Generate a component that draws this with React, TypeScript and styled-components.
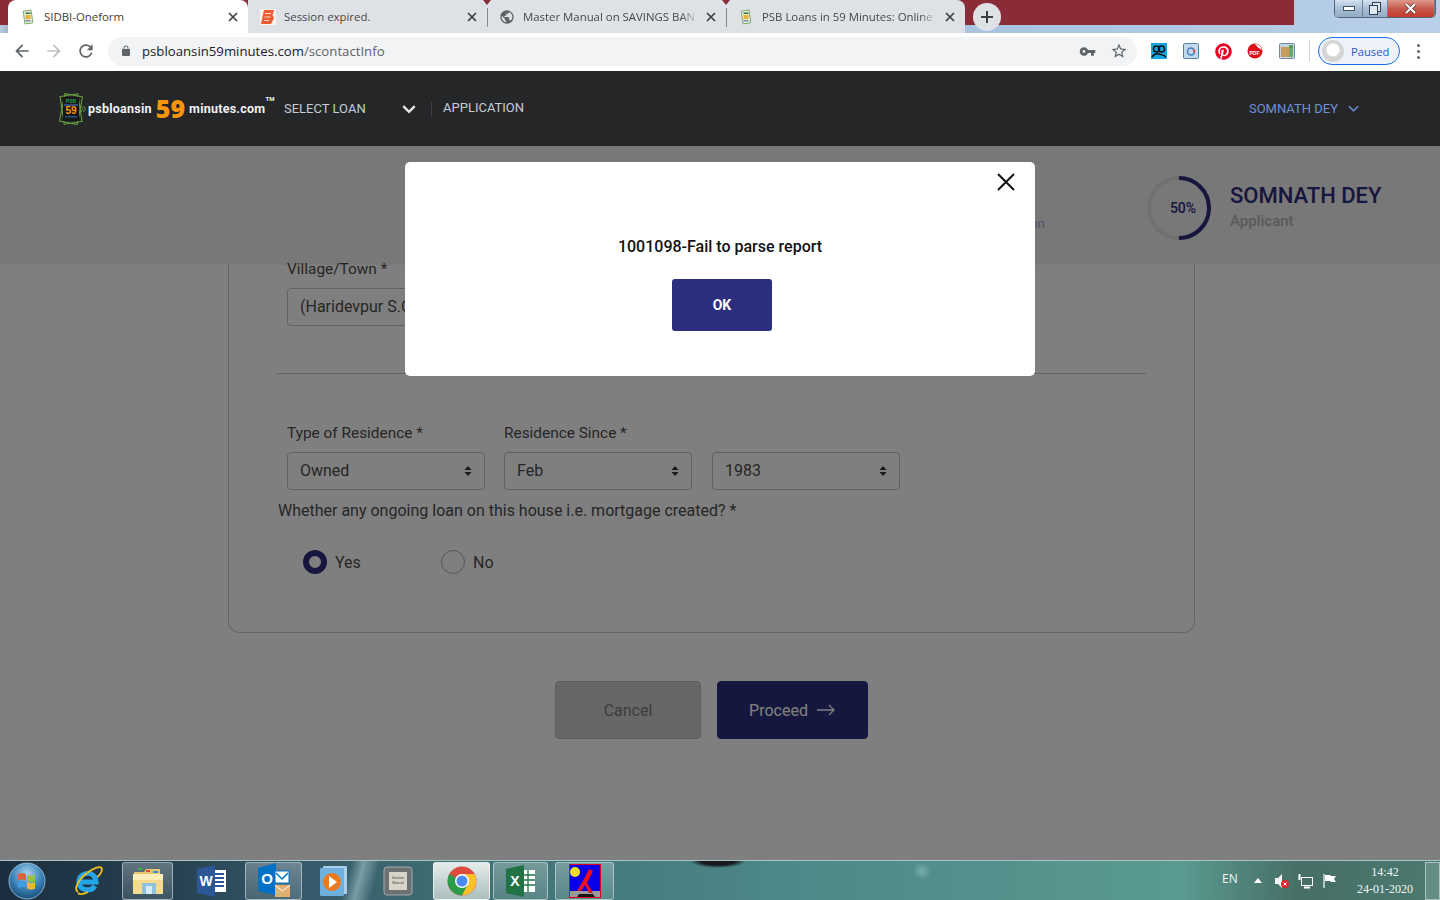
import React from "react";
import styled, { createGlobalStyle } from "styled-components";
import { FaPinterest } from "react-icons/fa";

const GlobalStyle = createGlobalStyle`
  html, body {
    margin: 0;
    padding: 0;
    background: #fff;
  }
  * {
    box-sizing: border-box;
  }
`;

const Screen = styled.div`
  width: 1440px;
  height: 900px;
  display: flex;
  flex-direction: column;
  overflow: hidden;
  font-family: Roboto, "Liberation Sans", sans-serif;
`;

/* ---------- browser chrome ---------- */

const TabStrip = styled.div`
  flex: none;
  height: 33px;
  display: flex;
  padding-left: 8px;
  position: relative;
  background:
    linear-gradient(#8a2c37, #8a2c37) no-repeat 0 0 / 1294px 25px,
    linear-gradient(90deg, #b7cbdf 0, #9db4ca 8px, #a8c4e0 1000px, #b9d0e8 100%);
`;

const Tab = styled.div<{ $active?: boolean; $divider?: boolean }>`
  position: relative;
  width: ${p => (p.$active ? 240 : 239)}px;
  display: flex;
  align-items: center;
  padding: 0 10px 0 12px;
  background: ${p => (p.$active ? "#fff" : "#dee1e6")};
  border-radius: ${p => (p.$active ? "8px 8px 0 0" : "0")};
  color: ${p => (p.$active ? "#3c4043" : "#45484c")};
  font-family: "Open Sans", "Liberation Sans", sans-serif;
  font-size: 11.4px;

  ${p =>
    p.$divider &&
    `
    &::before {
      content: "";
      position: absolute;
      left: 0;
      top: 8px;
      height: 19px;
      width: 1px;
      background: #85888d;
    }
    &::after {
      content: "";
      position: absolute;
      left: -4px;
      top: 0;
      border-left: 4px solid transparent;
      border-right: 4px solid transparent;
      border-top: 5px solid #8a2c37;
    }
  `}
`;

const LastTab = styled(Tab)`
  border-radius: 0 8px 0 0;
`;

const TabIcon = styled.svg`
  flex: none;
  width: 16px;
  height: 16px;
  margin-right: 8px;
`;

const TabTitle = styled.span<{ $fade?: boolean }>`
  flex: 1;
  white-space: nowrap;
  overflow: hidden;
  ${p =>
    p.$fade &&
    `
    -webkit-mask-image: linear-gradient(90deg, #000 90%, transparent 100%);
    mask-image: linear-gradient(90deg, #000 90%, transparent 100%);
  `}
`;

const TabClose = styled.svg`
  flex: none;
  width: 10px;
  height: 10px;
  margin-left: 8px;
`;

const NewTab = styled.div`
  width: 28px;
  height: 28px;
  margin: 3px 0 0 8px;
  border-radius: 50%;
  background: #dee1e6;
  display: flex;
  align-items: center;
  justify-content: center;
`;

const WindowControls = styled.div`
  position: absolute;
  top: 0;
  right: 4px;
  height: 18px;
  width: 102px;
  display: flex;
  border: 1px solid #54677c;
  border-top: none;
  border-radius: 0 0 5px 5px;
  overflow: hidden;
`;

const WindowButton = styled.div<{ $w: number; $close?: boolean }>`
  width: ${p => p.$w}px;
  display: flex;
  align-items: center;
  justify-content: center;
  border-right: 1px solid #6e8196;
  background: ${p =>
    p.$close
      ? "linear-gradient(#e09a8e, #c75a4c 50%, #c23a2c)"
      : "linear-gradient(#d4e2f0, #a9bed4 50%, #93abc4)"};
`;

const Toolbar = styled.div`
  flex: none;
  height: 38px;
  display: flex;
  align-items: center;
  background: #fff;
  padding: 0 12px 2px 6px;
`;

const NavButton = styled.div`
  width: 32px;
  display: flex;
  justify-content: center;
`;

const AddressBar = styled.div`
  width: 1029px;
  height: 29px;
  margin-left: 6px;
  border-radius: 15px;
  background: #f1f3f4;
  display: flex;
  align-items: center;
  padding: 0 2px 0 12px;
`;

const Url = styled.div`
  flex: 1;
  margin-left: 10px;
  font-family: "Open Sans", "Liberation Sans", sans-serif;
  font-size: 13.2px;
  color: #202124;
  span {
    color: #5f6368;
  }
`;

const AddressAction = styled.div`
  width: 32px;
  display: flex;
  justify-content: center;
`;

const Extensions = styled.div`
  display: flex;
  margin-left: 6px;
`;

const Extension = styled.div`
  width: 32px;
  display: flex;
  justify-content: center;
  align-items: center;
`;

const ToolbarSeparator = styled.div`
  width: 1px;
  height: 22px;
  margin: 0 8px 0 6px;
  background: #d4d6d9;
`;

const ProfilePill = styled.div`
  width: 82px;
  height: 28px;
  border: 1px solid #1a73e8;
  border-radius: 14px;
  background: #edf2fb;
  display: flex;
  align-items: center;
  padding-left: 3px;
  font-family: "Open Sans", "Liberation Sans", sans-serif;
  font-size: 11.2px;
  color: #2a56c6;
`;

const Avatar = styled.div`
  width: 22px;
  height: 22px;
  margin-right: 7px;
  border-radius: 50%;
  background: radial-gradient(circle at 50% 45%, #fff 0 6px, #d5d5d5 7px);
`;

const Kebab = styled.div`
  margin-left: 17px;
  display: flex;
  flex-direction: column;
  gap: 3px;
  i {
    width: 3px;
    height: 3px;
    border-radius: 50%;
    background: #5f6368;
  }
`;

/* ---------- site header ---------- */

const Navbar = styled.header`
  flex: none;
  height: 75px;
  background: #252628;
  display: flex;
  align-items: center;
  padding: 0 80px 0 56px;
`;

const Logo = styled.div`
  display: flex;
  align-items: center;
  width: 228px;
`;

const LogoText = styled.div`
  margin-left: 2px;
  display: flex;
  align-items: center;
  font-family: Roboto, sans-serif;
  font-weight: 700;
  font-size: 12.5px;
  letter-spacing: 0.25px;
  color: #f2f2f2;
  white-space: nowrap;
`;

const LogoNumber = styled.span`
  font-family: "Open Sans", sans-serif;
  font-weight: 800;
  font-size: 25px;
  letter-spacing: 0;
  color: #f7950d;
  margin: 0 4px;
  line-height: 1;
`;

const LogoTm = styled.sup`
  font-size: 6px;
  align-self: flex-start;
  margin: 0;
  line-height: 1;
`;

const NavLink = styled.div`
  font-size: 13px;
  color: #c6cdd8;
  white-space: nowrap;
`;

const ApplicationLink = styled(NavLink)`
  margin-top: -2px;
`;

const SelectLoan = styled(NavLink)`
  width: 133px;
  display: flex;
  align-items: center;
  justify-content: space-between;
`;

const NavDivider = styled.div`
  width: 1px;
  height: 14px;
  margin: 0 11px 0 14px;
  background: #3e4043;
`;

const UserMenu = styled.div`
  margin-left: auto;
  display: flex;
  align-items: center;
  gap: 9px;
  font-size: 13px;
  color: #6f8fdc;
`;

/* ---------- page below the dim layer ---------- */

const Content = styled.main`
  flex: 1;
  position: relative;
  overflow: hidden;
  background: #fff;
`;

const SubHeader = styled.div`
  height: 117px;
  display: flex;
  align-items: center;
  background: #f0f0f0;
  box-shadow: 0 1px 2px rgba(0, 0, 0, 0.1);
  position: relative;
  z-index: 1;
`;

const StepLabel = styled.div`
  margin-left: auto;
  padding-top: 38px;
  font-size: 13px;
  color: #a9a9d6;
  white-space: nowrap;
`;

const Progress = styled.div`
  position: relative;
  width: 64px;
  height: 64px;
  margin: 7px 19px 0 102px;
  padding-left: 8px;
  display: flex;
  align-items: center;
  justify-content: center;
  font-size: 14px;
  font-weight: 500;
  color: #2c2c7c;
  svg {
    position: absolute;
    inset: 0;
  }
`;

const Applicant = styled.div`
  width: 210px;
  padding-top: 3px;
`;

const ApplicantName = styled.div`
  font-size: 22px;
  font-weight: 500;
  line-height: 30px;
  color: #2c2c7c;
  white-space: nowrap;
`;

const ApplicantRole = styled.div`
  font-size: 15px;
  font-weight: 500;
  line-height: 20px;
  color: #b3b3b8;
`;

/* the card starts under the sub header, its top edge is never seen */
const Card = styled.section`
  width: 967px;
  height: 370px;
  margin-left: 228px;
  padding: 0 48px;
  border: 1px solid #c9c9c9;
  border-top: none;
  border-radius: 0 0 12px 12px;
  color: #4c4c4c;
`;

const Field = styled.div<{ $w?: number }>`
  width: ${p => p.$w ?? 198}px;
`;

const FieldLabel = styled.div`
  font-size: 15.4px;
  line-height: 18px;
  white-space: nowrap;
  margin-bottom: 10px;
  min-height: 18px;
`;

const TextBox = styled.div`
  height: 38px;
  border: 1px solid #c4c4c4;
  border-radius: 4px;
  display: flex;
  align-items: center;
  padding: 0 12px 2px;
  font-size: 16px;
  white-space: nowrap;
  overflow: hidden;
`;

const SelectBox = styled(TextBox)`
  justify-content: space-between;
  svg {
    flex: none;
    margin-top: 2px;
  }
`;

const VillageRow = styled.div`
  display: flow-root;
`;

const VillageField = styled(Field)`
  margin: -3px 0 0 10px;
`;

const Rule = styled.hr`
  margin: 47px 0 50px;
  border: none;
  border-top: 1px solid #c9c9c9;
`;

const ResidenceRow = styled.div`
  display: flex;
  padding-left: 10px;
  gap: 19px;
`;

const SinceFields = styled.div`
  display: flex;
  gap: 20px;
`;

const Question = styled.div`
  margin-top: 11px;
  padding-left: 1px;
  font-size: 16px;
  line-height: 20px;
  white-space: nowrap;
`;

const RadioRow = styled.div`
  display: flex;
  margin: 29px 0 0 26px;
`;

const RadioOption = styled.label`
  width: 138px;
  display: flex;
  align-items: center;
  gap: 8px;
  font-size: 16px;
`;

const RadioMark = styled.span<{ $checked?: boolean }>`
  width: 24px;
  height: 24px;
  border-radius: 50%;
  border: ${p => (p.$checked ? "6px solid #2c2c7c" : "1px solid #aaa")};
  background: #fff;
`;

const Actions = styled.div`
  width: 967px;
  margin: 48px 0 0 228px;
  display: flex;
  justify-content: center;
  gap: 16px;
`;

const ActionButton = styled.button<{ $primary?: boolean }>`
  width: ${p => (p.$primary ? 151 : 146)}px;
  height: 58px;
  border-radius: 4px;
  border: 1px solid ${p => (p.$primary ? "#2c2c7c" : "#bdbdbd")};
  background: ${p => (p.$primary ? "#2c2f7c" : "#cfcfcf")};
  color: ${p => (p.$primary ? "#fff" : "#7a7a7a")};
  font-family: inherit;
  font-size: 16px;
  display: flex;
  align-items: center;
  justify-content: center;
  gap: 8px;
`;

/* ---------- dialog ---------- */

const Overlay = styled.div`
  position: absolute;
  inset: 0;
  z-index: 5;
  background: rgba(0, 0, 0, 0.5);
`;

const Modal = styled.div`
  position: relative;
  width: 630px;
  height: 214px;
  margin: 16px auto 0;
  padding-top: 75px;
  background: #fff;
  border-radius: 5px;
  display: flex;
  flex-direction: column;
  align-items: center;
`;

const ModalClose = styled.svg`
  position: absolute;
  top: 11px;
  right: 20px;
`;

const ModalMessage = styled.div`
  font-size: 16px;
  font-weight: 500;
  line-height: 20px;
  color: #111;
`;

const ModalButton = styled.button`
  width: 100px;
  height: 52px;
  margin: 22px 0 0 4px;
  border: none;
  border-radius: 3px;
  background: #2c2f7f;
  color: #fff;
  font-family: inherit;
  font-size: 14px;
  font-weight: 700;
`;

/* ---------- windows taskbar ---------- */

const Taskbar = styled.footer`
  flex: none;
  height: 40px;
  display: flex;
  align-items: center;
  border-top: 1px solid #a9c4c4;
  background:
    radial-gradient(ellipse 28px 7px at 718px 0, #17191d 60%, transparent 100%),
    radial-gradient(circle 9px at 922px 10px, rgba(160, 205, 200, 0.5), transparent),
    linear-gradient(105deg, transparent 340px, rgba(185, 215, 220, 0.5) 352px, transparent 368px),
    linear-gradient(90deg, #1b2d40 0, #26414f 170px, #36596a 300px, #3f7173 480px, #4d8687 760px, #5a9a90 1180px, #466e66 1300px, #4b7a70 100%);
`;

const TaskSlot = styled.div<{ $w: number; $state?: "open" | "focus" }>`
  flex: none;
  width: ${p => p.$w}px;
  height: 38px;
  display: flex;
  align-items: center;
  justify-content: center;
  border-radius: 3px;
  ${p =>
    p.$state === "open" &&
    `
    border: 1px solid rgba(220, 235, 240, 0.55);
    background: linear-gradient(rgba(255,255,255,0.28), rgba(255,255,255,0.12));
  `}
  ${p =>
    p.$state === "focus" &&
    `
    border: 1px solid rgba(240, 245, 245, 0.8);
    background: linear-gradient(#e4eceb, #a9bfbe);
  `}
`;

const TaskEdge = styled.div<{ $w: number }>`
  flex: none;
  width: ${p => p.$w}px;
  height: 38px;
`;

const Tray = styled.div`
  margin-left: auto;
  height: 38px;
  display: flex;
  align-items: center;
  color: #f2f6f5;
  font-family: "Open Sans", "Liberation Sans", sans-serif;
  font-size: 12px;
`;

const TrayLang = styled.div`
  width: 22px;
  margin: -4px 2px 0 0;
`;

const TrayIcon = styled.div`
  width: 24px;
  display: flex;
  justify-content: center;
`;

const Clock = styled.div`
  width: 76px;
  margin-left: 5px;
  text-align: center;
  line-height: 17px;
  font-family: "Liberation Serif", serif;
  font-size: 12px;
`;

const ShowDesktop = styled.div`
  width: 15px;
  height: 38px;
  margin-left: 2px;
  border: 1px solid rgba(220, 235, 235, 0.6);
  background: rgba(255, 255, 255, 0.15);
`;

const Glyph: React.FC<{ d: string; size?: number; color?: string }> = ({ d, size = 20, color = "#5f6368" }) => (
  <svg width={size} height={size} viewBox="0 0 24 24" fill={color}>
    <path d={d} />
  </svg>
);

const BACK = "M20 11H7.83l5.59-5.59L12 4l-8 8 8 8 1.41-1.41L7.83 13H20v-2z";
const FORWARD = "M12 4l-1.41 1.41L16.17 11H4v2h12.17l-5.58 5.59L12 20l8-8z";
const RELOAD =
  "M17.65 6.35C16.2 4.9 14.21 4 12 4c-4.42 0-7.99 3.58-7.99 8s3.57 8 7.99 8c3.73 0 6.84-2.55 7.73-6h-2.08c-.82 2.33-3.04 4-5.65 4-3.31 0-6-2.69-6-6s2.69-6 6-6c1.66 0 3.14.69 4.22 1.78L13 11h7V4l-2.35 2.35z";
const LOCK =
  "M18 8h-1V6c0-2.76-2.24-5-5-5S7 3.24 7 6v2H6c-1.1 0-2 .9-2 2v10c0 1.1.9 2 2 2h12c1.1 0 2-.9 2-2V10c0-1.1-.9-2-2-2zM9 6c0-1.66 1.34-3 3-3s3 1.34 3 3v2H9V6z";
const KEY =
  "M12.65 10C11.83 7.67 9.61 6 7 6c-3.31 0-6 2.69-6 6s2.69 6 6 6c2.61 0 4.83-1.67 5.65-4H17v4h4v-4h2v-4H12.65zM7 14c-1.1 0-2-.9-2-2s.9-2 2-2 2 .9 2 2-.9 2-2 2z";
const STAR =
  "M22 9.24l-7.19-.62L12 2 9.19 8.63 2 9.24l5.46 4.73L5.82 21 12 17.27 18.18 21l-1.63-7.03L22 9.24zM12 15.4l-3.76 2.27 1-4.28-3.32-2.88 4.38-.38L12 6.1l1.71 4.04 4.38.38-3.32 2.88 1 4.28L12 15.4z";
const GLOBE =
  "M12 2C6.48 2 2 6.48 2 12s4.48 10 10 10 10-4.48 10-10S17.52 2 12 2zm-1 17.93c-3.95-.49-7-3.85-7-7.93 0-.62.08-1.21.21-1.79L9 15v1c0 1.1.9 2 2 2v1.93zm6.9-2.54c-.26-.81-1-1.39-1.9-1.39h-1v-3c0-.55-.45-1-1-1H8v-2h2c.55 0 1-.45 1-1V7h2c1.1 0 2-.9 2-2v-.41c2.93 1.19 5 4.06 5 7.41 0 2.08-.8 3.97-2.1 5.39z";

const CloseX: React.FC = () => (
  <TabClose viewBox="0 0 10 10">
    <path d="M1 1l8 8M9 1l-8 8" stroke="#3c4043" strokeWidth="1.7" />
  </TabClose>
);

const PsbFavicon: React.FC = () => (
  <TabIcon viewBox="0 0 16 16">
    <rect x="4" y="1.5" width="8" height="13" rx="1" fill="#e8ecd8" stroke="#7fae6a" strokeWidth="1" transform="rotate(-8 8 8)" />
    <rect x="5.5" y="6" width="5" height="4" fill="#e8b23a" />
    <rect x="5.5" y="3.5" width="5" height="1.5" fill="#3c6e45" />
    <rect x="5.5" y="11" width="5" height="1.5" fill="#7b8cb8" />
  </TabIcon>
);

const BankFavicon: React.FC = () => (
  <TabIcon viewBox="0 0 16 16">
    <rect width="16" height="16" fill="#fdf1ec" />
    <path d="M1 15L4 1h10l-1.500 5 1.500 3-3 6z" fill="#ee5b2f" />
    <path d="M5 4.500h6M4.500 8h6M4 11.500h5" stroke="#ffd9cc" strokeWidth="1.200" />
  </TabIcon>
);

const SmallChevron: React.FC<{ color: string; size?: number; w?: number }> = ({ color, size = 14, w = 2 }) => (
  <svg width={size} height={size} viewBox="0 0 14 14" fill="none">
    <path d="M2 4.5L7 9.5L12 4.5" stroke={color} strokeWidth={w} />
  </svg>
);

const UpDown: React.FC = () => (
  <svg width="8" height="12" viewBox="0 0 8 12" fill="#333">
    <path d="M4 1L7.6 5H.4zM4 11L.4 7h7.2z" />
  </svg>
);

const LogoMark: React.FC = () => (
  <svg width="30" height="32" viewBox="0 0 30 32" fill="none">
    <rect x="6" y="2" width="18" height="28" stroke="#6aa53e" strokeWidth="1" transform="rotate(-9 15 16)" />
    <rect x="6" y="2" width="18" height="28" stroke="#6aa53e" strokeWidth="1" transform="rotate(11 15 16)" />
    <rect x="7" y="4" width="16" height="24" fill="#17191b" />
    <text x="15" y="10" textAnchor="middle" fontSize="5" fontWeight="700" fill="#1ea34a" fontFamily="Liberation Sans">PSB</text>
    <rect x="8" y="11" width="14" height="2" fill="#2f4f7f" />
    <text x="15" y="21" textAnchor="middle" fontSize="10" fontWeight="700" fill="#f7950d" fontFamily="Liberation Sans">59</text>
    <rect x="9" y="23" width="12" height="1.500" fill="#2f4f7f" />
    <path d="M25 13l2 3-2 3M27.500 13l2 3-2 3" stroke="#6aa53e" strokeWidth="0.800" />
  </svg>
);

const OrbIcon: React.FC = () => (
  <svg width="38" height="38" viewBox="0 0 38 38">
    <defs>
      <radialGradient id="orb" cx="50%" cy="30%" r="75%">
        <stop offset="0" stopColor="#a8d4ee" />
        <stop offset="0.55" stopColor="#3b82b8" />
        <stop offset="1" stopColor="#14466e" />
      </radialGradient>
    </defs>
    <circle cx="19" cy="19" r="18" fill="url(#orb)" stroke="#a9c9de" strokeWidth="0.800" />
    <path d="M10 12c3-1.500 5-1.500 8 0v6.500c-3-1.500-5-1.500-8 0z" fill="#e2603a" />
    <path d="M19 12.500c3 1.500 5 1.500 8 0V19c-3 1.500-5 1.500-8 0z" fill="#8ec63f" />
    <path d="M10 19.500c3-1.500 5-1.500 8 0V26c-3-1.500-5-1.500-8 0z" fill="#3f9fe0" />
    <path d="M19 20c3 1.500 5 1.500 8 0v6.500c-3 1.500-5 1.500-8 0z" fill="#f0b92d" />
  </svg>
);

const IeIcon: React.FC = () => (
  <svg width="32" height="34" viewBox="0 0 32 34" fill="none">
    <path d="M7 18h17c0-12-17-11-17 0 0 9 12 10 16 4" stroke="#25a6ea" strokeWidth="5" />
    <path d="M6 28c-5-3 1-13 9-19 6-4.500 13-7.500 14.500-5 1 2-1 6-4 9" stroke="#f2c21a" strokeWidth="1.800" />
    <path d="M6 29c2 2 6 1 10-1" stroke="#f2c21a" strokeWidth="1.800" />
  </svg>
);

const FolderIcon: React.FC = () => (
  <svg width="32" height="30" viewBox="0 0 32 30">
    <path d="M2 6h10l2-3h14v5H2z" fill="#e8c96a" />
    <rect x="6" y="2" width="4" height="2" fill="#37b24d" />
    <rect x="14" y="4" width="4" height="2" fill="#d9483b" />
    <rect x="21" y="5" width="5" height="2" fill="#3f8fd8" />
    <path d="M1 8h30v20H1z" fill="#f4dc8e" />
    <path d="M1 8h30v6H1z" fill="#fbeeb8" />
    <rect x="10" y="17" width="14" height="11" fill="#8ec2de" />
    <rect x="14" y="20" width="6" height="8" fill="#d9ecf5" />
  </svg>
);

const WordIcon: React.FC = () => (
  <svg width="30" height="32" viewBox="0 0 30 32">
    <rect x="15" y="5" width="14" height="22" fill="#fff" />
    <path d="M18 9h9M18 13h9M18 17h9M18 21h9" stroke="#2b5797" strokeWidth="2" />
    <path d="M0 4l18-4v32L0 28z" fill="#2b5797" />
    <text x="9" y="21" textAnchor="middle" fontSize="14" fontWeight="700" fill="#fff" fontFamily="Liberation Sans">W</text>
  </svg>
);

const OutlookIcon: React.FC = () => (
  <svg width="32" height="36" viewBox="0 0 32 36">
    <path d="M0 5l18-5v32L0 28z" fill="#0072c6" />
    <text x="9" y="21" textAnchor="middle" fontSize="15" fontWeight="700" fill="#fff" fontFamily="Liberation Sans">O</text>
    <rect x="17" y="8" width="14" height="12" fill="#fff" stroke="#0072c6" />
    <path d="M18 10l6 6 6-6" fill="none" stroke="#0072c6" strokeWidth="1.500" />
    <path d="M17 22h15v12H17z" fill="#e3b073" />
    <path d="M17 22l7.500 6 7.500-6" fill="none" stroke="#fff" strokeWidth="1" />
  </svg>
);

const MediaIcon: React.FC = () => (
  <svg width="30" height="32" viewBox="0 0 30 32">
    <rect x="4" y="1" width="24" height="28" rx="1" fill="#a8d0ea" />
    <rect x="1" y="3" width="24" height="28" rx="1" fill="#6fb0dc" />
    <circle cx="13" cy="17" r="9" fill="#ec7a1c" />
    <path d="M10 11l8 6-8 6z" fill="#fff" />
  </svg>
);

const CalcIcon: React.FC = () => (
  <svg width="30" height="30" viewBox="0 0 30 30">
    <rect x="1" y="1" width="28" height="28" rx="3" fill="#6c7274" stroke="#a3abad" />
    <rect x="6" y="6" width="18" height="18" fill="#d8d4c8" />
    <text x="15" y="13" textAnchor="middle" fontSize="3.500" fill="#444" fontFamily="Liberation Sans">Solution</text>
    <text x="15" y="18" textAnchor="middle" fontSize="3.500" fill="#444" fontFamily="Liberation Sans">Manual</text>
  </svg>
);

const ChromeIcon: React.FC = () => (
  <svg width="30" height="30" viewBox="0 0 30 30">
    <circle cx="15" cy="15" r="14.500" fill="#dd4b3e" />
    <path d="M15 15L2.400 8A14.500 14.500 0 0 0 15 29.500L22 17z" fill="#2a9c4a" />
    <path d="M15 8h12.500A14.500 14.500 0 0 1 15 29.500L21 18z" fill="#fbc22d" />
    <circle cx="15" cy="15" r="7" fill="#fff" />
    <circle cx="15" cy="15" r="5.500" fill="#4a8bf0" />
  </svg>
);

const ExcelIcon: React.FC = () => (
  <svg width="30" height="32" viewBox="0 0 30 32">
    <rect x="15" y="5" width="14" height="22" fill="#fff" />
    <path d="M16 10h13M16 15h13M16 20h13M22 5v22" stroke="#217346" strokeWidth="1.300" />
    <path d="M0 4l18-4v32L0 28z" fill="#217346" />
    <text x="9" y="21" textAnchor="middle" fontSize="14" fontWeight="700" fill="#fff" fontFamily="Liberation Sans">X</text>
  </svg>
);

const RedAppIcon: React.FC = () => (
  <svg width="32" height="34" viewBox="0 0 32 34">
    <rect x="0.500" y="0.500" width="31" height="33" fill="#0a00e8" stroke="#e0001a" />
    <rect x="1" y="27" width="30" height="6" fill="#9a9a9a" />
    <circle cx="6" cy="8" r="5" fill="#f6e01e" />
    <path d="M8 27l6-10 6-12 4 2-6 12 6 10-4 0-4-8-4 6z" fill="#ee0f17" />
    <path d="M10 30h14l2 3H8z" fill="#141414" />
  </svg>
);

const App: React.FC = () => (
  <Screen>
    <GlobalStyle />

    <TabStrip>
      <Tab $active>
        <PsbFavicon />
        <TabTitle>SIDBI-Oneform</TabTitle>
        <CloseX />
      </Tab>
      <Tab>
        <BankFavicon />
        <TabTitle>Session expired.</TabTitle>
        <CloseX />
      </Tab>
      <Tab $divider>
        <TabIcon viewBox="0 0 24 24" fill="#5f6368">
          <path d={GLOBE} />
        </TabIcon>
        <TabTitle $fade>Master Manual on SAVINGS BAN</TabTitle>
        <CloseX />
      </Tab>
      <LastTab $divider>
        <PsbFavicon />
        <TabTitle $fade>PSB Loans in 59 Minutes: Online</TabTitle>
        <CloseX />
      </LastTab>
      <NewTab>
        <svg width="14" height="14" viewBox="0 0 14 14">
          <path d="M7 1v12M1 7h12" stroke="#3c4043" strokeWidth="2" />
        </svg>
      </NewTab>
      <WindowControls>
        <WindowButton $w={29}>
          <svg width="12" height="6" viewBox="0 0 12 6">
            <rect x="0.500" y="0.500" width="11" height="4" fill="#fff" stroke="#3f5368" />
          </svg>
        </WindowButton>
        <WindowButton $w={25}>
          <svg width="12" height="13" viewBox="0 0 12 13" fill="#dfe8f1" stroke="#2f4256">
            <rect x="3.500" y="0.500" width="8" height="9" />
            <rect x="0.500" y="3.500" width="8" height="9" />
          </svg>
        </WindowButton>
        <WindowButton $w={48} $close>
          <svg width="13" height="11" viewBox="0 0 13 11">
            <path d="M2 1l9 9M11 1l-9 9" stroke="#4c2b2b" strokeWidth="3.400" />
            <path d="M2 1l9 9M11 1l-9 9" stroke="#fff" strokeWidth="2.200" />
          </svg>
        </WindowButton>
      </WindowControls>
    </TabStrip>

    <Toolbar>
      <NavButton>
        <Glyph d={BACK} size={20} color="#5f6368" />
      </NavButton>
      <NavButton>
        <Glyph d={FORWARD} size={20} color="#bdc0c4" />
      </NavButton>
      <NavButton>
        <Glyph d={RELOAD} size={20} color="#5f6368" />
      </NavButton>
      <AddressBar>
        <Glyph d={LOCK} size={12} color="#5f6368" />
        <Url>
          psbloansin59minutes.com<span>/scontactInfo</span>
        </Url>
        <AddressAction>
          <Glyph d={KEY} size={17} />
        </AddressAction>
        <AddressAction>
          <Glyph d={STAR} size={18} />
        </AddressAction>
      </AddressBar>
      <Extensions>
        <Extension>
          <svg width="16" height="16" viewBox="0 0 16 16">
            <rect width="16" height="16" fill="#12a5e0" />
            <circle cx="5.500" cy="6" r="3" fill="none" stroke="#111" strokeWidth="1.500" />
            <circle cx="10.500" cy="6" r="3" fill="none" stroke="#111" strokeWidth="1.500" />
            <path d="M1 14c2-3 4-4 7-3s5 1 7 3" fill="none" stroke="#111" strokeWidth="1.500" />
          </svg>
        </Extension>
        <Extension>
          <svg width="16" height="16" viewBox="0 0 16 16">
            <rect x="0.500" y="0.500" width="15" height="15" rx="1" fill="#c4d8ec" stroke="#5580a8" />
            <circle cx="8" cy="8.500" r="3.500" fill="none" stroke="#3f7fc4" strokeWidth="1.500" />
            <path d="M10 6a3.500 3.500 0 0 1 1 4" fill="none" stroke="#d9483b" strokeWidth="1.500" />
          </svg>
        </Extension>
        <Extension>
          <FaPinterest size={17} color="#e60023" />
        </Extension>
        <Extension>
          <svg width="16" height="16" viewBox="0 0 16 16">
            <circle cx="8" cy="8" r="7.500" fill="#e0101a" />
            <path d="M8 1a7 7 0 0 1 7 6c-3-2-5-3-7-6z" fill="#fff" />
            <text x="7.500" y="12" textAnchor="middle" fontSize="5" fontWeight="700" fill="#fff" fontFamily="Liberation Sans">PDF</text>
          </svg>
        </Extension>
        <Extension>
          <svg width="16" height="16" viewBox="0 0 16 16">
            <rect x="0.500" y="0.500" width="15" height="15" rx="1" fill="#c4d4e0" stroke="#6f8ba3" />
            <rect x="2" y="4" width="9" height="10" fill="#c99a5e" />
            <rect x="10" y="2" width="4" height="12" fill="#6ea86c" />
            <circle cx="12" cy="4" r="1.500" fill="#3f9a47" />
          </svg>
        </Extension>
      </Extensions>
      <ToolbarSeparator />
      <ProfilePill>
        <Avatar />
        Paused
      </ProfilePill>
      <Kebab>
        <i />
        <i />
        <i />
      </Kebab>
    </Toolbar>

    <Navbar>
      <Logo>
        <LogoMark />
        <LogoText>
          psbloansin
          <LogoNumber>59</LogoNumber>
          minutes.com
          <LogoTm>TM</LogoTm>
        </LogoText>
      </Logo>
      <SelectLoan>
        SELECT LOAN
        <SmallChevron color="#e8e8e8" size={16} />
      </SelectLoan>
      <NavDivider />
      <ApplicationLink>APPLICATION</ApplicationLink>
      <UserMenu>
        SOMNATH DEY
        <SmallChevron color="#6f8fdc" size={13} w={1.6} />
      </UserMenu>
    </Navbar>

    <Content>
      <SubHeader>
        <StepLabel>Contact Information</StepLabel>
        <Progress>
          <svg width="64" height="64" viewBox="0 0 64 64" fill="none">
            <circle cx="32" cy="32" r="30" stroke="#e4e0dc" strokeWidth="4" />
            <path d="M32 2a30 30 0 0 1 0 60" stroke="#2c2c7c" strokeWidth="4" />
          </svg>
          50%
        </Progress>
        <Applicant>
          <ApplicantName>SOMNATH DEY</ApplicantName>
          <ApplicantRole>Applicant</ApplicantRole>
        </Applicant>
      </SubHeader>

      <Card>
        <VillageRow>
          <VillageField>
            <FieldLabel>Village/Town *</FieldLabel>
            <TextBox>(Haridevpur S.O)</TextBox>
          </VillageField>
        </VillageRow>
        <Rule />
        <ResidenceRow>
          <Field>
            <FieldLabel>Type of Residence *</FieldLabel>
            <SelectBox>
              Owned
              <UpDown />
            </SelectBox>
          </Field>
          <SinceFields>
            <Field $w={188}>
              <FieldLabel>Residence Since *</FieldLabel>
              <SelectBox>
                Feb
                <UpDown />
              </SelectBox>
            </Field>
            <Field $w={188}>
              <FieldLabel />
              <SelectBox>
                1983
                <UpDown />
              </SelectBox>
            </Field>
          </SinceFields>
        </ResidenceRow>
        <Question>Whether any ongoing loan on this house i.e. mortgage created? *</Question>
        <RadioRow>
          <RadioOption>
            <RadioMark $checked />
            Yes
          </RadioOption>
          <RadioOption>
            <RadioMark />
            No
          </RadioOption>
        </RadioRow>
      </Card>

      <Actions>
        <ActionButton>Cancel</ActionButton>
        <ActionButton $primary>
          Proceed
          <svg width="20" height="12" viewBox="0 0 20 12" fill="none">
            <path d="M1 6h17M13 1l5 5-5 5" stroke="#fff" strokeWidth="1.300" />
          </svg>
        </ActionButton>
      </Actions>

      <Overlay>
        <Modal>
          <ModalClose width="18" height="18" viewBox="0 0 18 18">
            <path d="M1 1l16 16M17 1L1 17" stroke="#111" strokeWidth="2" />
          </ModalClose>
          <ModalMessage>1001098-Fail to parse report</ModalMessage>
          <ModalButton>OK</ModalButton>
        </Modal>
      </Overlay>
    </Content>

    <Taskbar>
      <TaskSlot $w={54}>
        <OrbIcon />
      </TaskSlot>
      <TaskSlot $w={68}>
        <IeIcon />
      </TaskSlot>
      <TaskSlot $w={51} $state="open">
        <FolderIcon />
      </TaskSlot>
      <TaskEdge $w={5} />
      <TaskSlot $w={67}>
        <WordIcon />
      </TaskSlot>
      <TaskSlot $w={57} $state="open">
        <OutlookIcon />
      </TaskSlot>
      <TaskEdge $w={3} />
      <TaskSlot $w={58}>
        <MediaIcon />
      </TaskSlot>
      <TaskSlot $w={70}>
        <CalcIcon />
      </TaskSlot>
      <TaskSlot $w={57} $state="focus">
        <ChromeIcon />
      </TaskSlot>
      <TaskEdge $w={3} />
      <TaskSlot $w={55} $state="open">
        <ExcelIcon />
      </TaskSlot>
      <TaskEdge $w={7} />
      <TaskSlot $w={59} $state="open">
        <RedAppIcon />
      </TaskSlot>
      <Tray>
        <TrayLang>EN</TrayLang>
        <TrayIcon>
          <svg width="8" height="5" viewBox="0 0 8 5" fill="#fff">
            <path d="M4 0l4 5H0z" />
          </svg>
        </TrayIcon>
        <TrayIcon>
          <svg width="18" height="18" viewBox="0 0 18 18">
            <path d="M2 6h3l4-4v14l-4-4H2z" fill="#f3f3f3" />
            <circle cx="12" cy="12" r="4" fill="#e0222a" />
            <path d="M10.500 10.500l3 3M13.500 10.500l-3 3" stroke="#fff" />
          </svg>
        </TrayIcon>
        <TrayIcon>
          <svg width="16" height="18" viewBox="0 0 16 18" fill="none" stroke="#fff">
            <rect x="3.500" y="5.500" width="11" height="8" />
            <path d="M1.500 2v6M6 15.500h6" strokeWidth="2" />
          </svg>
        </TrayIcon>
        <TrayIcon>
          <svg width="16" height="16" viewBox="0 0 16 16">
            <path d="M2 1v14" stroke="#fff" strokeWidth="1.200" />
            <path d="M3 2h5l1 1h5l-2 3 2 3H9L8 8H3z" fill="#fff" />
          </svg>
        </TrayIcon>
        <Clock>
          14:42
          <br />
          24-01-2020
        </Clock>
        <ShowDesktop />
      </Tray>
    </Taskbar>
  </Screen>
);

export default App;
